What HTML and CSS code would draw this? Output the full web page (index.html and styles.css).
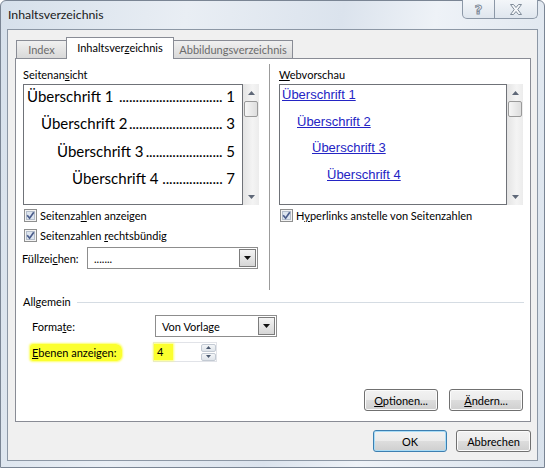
FILE: index.html
```html
<!DOCTYPE html>
<html lang="de">
<head>
  <meta charset="UTF-8">
  <title>Inhaltsverzeichnis</title>
  <link rel="stylesheet" href="styles.css">
</head>
<body>

<div class="window">
  <div class="titlebar">
    <span class="title">Inhaltsverzeichnis</span>
    <div class="caption-btns">
      <div class="cap-btn help">?</div>
      <div class="cap-btn close">
        <svg width="14" height="11" viewBox="0 0 14 11"><path d="M1.5 .5H4.5L7 3.5L9.5 .5H12.5L8.8 5.5L12.5 10.5H9.5L7 7.5L4.5 10.5H1.5L5.2 5.5Z" fill="#f6f8fa" stroke="#7f8b99"/></svg>
      </div>
    </div>
  </div>

  <div class="client">
    <div class="tabs">
      <div class="tab tab-index">Index</div>
      <div class="tab tab-toc active">Inhaltsver<u>z</u>eichnis</div>
      <div class="tab tab-figures">Abbildungsverzeichnis</div>
    </div>

    <div class="panel">
      <div class="columns">
        <div class="col col-left">
          <div class="label">Seitenan<u>s</u>icht</div>
          <div class="preview">
            <div class="list toc-list">
              <div class="toc-row lvl1"><span>Überschrift 1 </span><span class="leader">...............................</span><span class="num"> 1</span></div>
              <div class="toc-row lvl2"><span>Überschrift 2</span><span class="leader">............................</span><span class="num"> 3</span></div>
              <div class="toc-row lvl3"><span>Überschrift 3</span><span class="leader">.......................</span><span class="num"> 5</span></div>
              <div class="toc-row lvl4"><span>Überschrift 4 </span><span class="leader">..................</span><span class="num"> 7</span></div>
            </div>
            <div class="scrollbar">
              <div class="arrow"><svg width="7" height="4"><polygon points="0,4 3.5,0 7,4" fill="#5f6878"/></svg></div>
              <div class="thumb"></div>
              <div class="track"></div>
              <div class="arrow"><svg width="7" height="4"><polygon points="0,0 7,0 3.5,4" fill="#5f6878"/></svg></div>
            </div>
          </div>

          <label class="check">
            <svg class="box" width="13" height="13" viewBox="0 0 13 13"><rect x=".5" y=".5" width="12" height="12" fill="#f3f3f3" stroke="#8e8f8f"/><rect x="2.5" y="2.5" width="8" height="8" fill="#dde5ef" stroke="#b3bdcb"/><path d="M3.2 6.3L5.6 9.2L9.8 3.2" fill="none" stroke="#4b5d8c" stroke-width="1.7"/></svg>
            <span>Seitenza<u>h</u>len anzeigen</span>
          </label>
          <label class="check">
            <svg class="box" width="13" height="13" viewBox="0 0 13 13"><rect x=".5" y=".5" width="12" height="12" fill="#f3f3f3" stroke="#8e8f8f"/><rect x="2.5" y="2.5" width="8" height="8" fill="#dde5ef" stroke="#b3bdcb"/><path d="M3.2 6.3L5.6 9.2L9.8 3.2" fill="none" stroke="#4b5d8c" stroke-width="1.7"/></svg>
            <span>Seitenzahlen <u>r</u>echtsbündig</span>
          </label>

          <div class="field-row">
            <span class="field-label">Füllzei<u>c</u>hen:</span>
            <div class="combo combo-fill">
              <span class="combo-text">.......</span>
              <span class="drop"><svg width="7" height="4"><polygon points="0,0 7,0 3.5,4" fill="#111"/></svg></span>
            </div>
          </div>
        </div>

        <div class="divider"></div>

        <div class="col col-right">
          <div class="label"><u>W</u>ebvorschau</div>
          <div class="preview">
            <div class="list web-list">
              <a class="web-row lvl1">Überschrift 1</a>
              <a class="web-row lvl2">Überschrift 2</a>
              <a class="web-row lvl3">Überschrift 3</a>
              <a class="web-row lvl4">Überschrift 4</a>
            </div>
            <div class="scrollbar">
              <div class="arrow"><svg width="7" height="4"><polygon points="0,4 3.5,0 7,4" fill="#5f6878"/></svg></div>
              <div class="thumb"></div>
              <div class="track"></div>
              <div class="arrow"><svg width="7" height="4"><polygon points="0,0 7,0 3.5,4" fill="#5f6878"/></svg></div>
            </div>
          </div>

          <label class="check">
            <svg class="box" width="13" height="13" viewBox="0 0 13 13"><rect x=".5" y=".5" width="12" height="12" fill="#f3f3f3" stroke="#8e8f8f"/><rect x="2.5" y="2.5" width="8" height="8" fill="#dde5ef" stroke="#b3bdcb"/><path d="M3.2 6.3L5.6 9.2L9.8 3.2" fill="none" stroke="#4b5d8c" stroke-width="1.7"/></svg>
            <span>H<u>y</u>perlinks anstelle von Seitenzahlen</span>
          </label>
        </div>
      </div>

      <div class="group-title">Allgemein</div>

      <div class="form-row">
        <span class="form-label">Forma<u>t</u>e:</span>
        <div class="combo combo-format">
          <span class="combo-text">Von Vorlage</span>
          <span class="drop"><svg width="7" height="4"><polygon points="0,0 7,0 3.5,4" fill="#111"/></svg></span>
        </div>
      </div>

      <div class="form-row levels">
        <span class="form-label"><span class="marker"><u>E</u>benen anzeigen:</span></span>
        <div class="spinner">
          <span class="spin-value">4</span>
          <span class="spin-btns">
            <span class="spin-btn"><svg width="5" height="3"><polygon points="0,3 2.5,0 5,3" fill="#4c5a70"/></svg></span>
            <span class="spin-btn"><svg width="5" height="3"><polygon points="0,0 5,0 2.5,3" fill="#4c5a70"/></svg></span>
          </span>
        </div>
      </div>

      <div class="panel-buttons">
        <button class="btn"><u>O</u>ptionen...</button>
        <button class="btn"><u>Ä</u>ndern...</button>
      </div>
    </div>

    <div class="dialog-buttons">
      <button class="btn btn-default">OK</button>
      <button class="btn btn-cancel">Abbrechen</button>
    </div>
  </div>
</div>

</body>
</html>
```

FILE: styles.css
```css
* {
  box-sizing: border-box;
}
body {
  margin: 0;
  font-family: Lato, "Liberation Sans", sans-serif;
  font-size: 11px;
  color: #000;
  background: #fff;
}
u {
  text-decoration: underline;
  text-underline-offset: 1px;
}

/* window frame */
.window {
  width: 545px;
  height: 468px;
  display: flex;
  flex-direction: column;
  padding: 0 6px 6px;
  border: 1px solid #7a8594;
  border-radius: 6px 6px 0 0;
  background: linear-gradient(100deg, #d6e0eb 0%, #e9eef4 30%, #dbe3ed 55%, #eef2f7 70%, #d9e2ec 100%);
}
.titlebar {
  height: 28px;
  display: flex;
  align-items: flex-start;
}
.title {
  margin: 7px 0 0 1px;
  font-size: 12.3px;
  line-height: 14px;
  color: #1a1a1a;
}
.caption-btns {
  margin-left: auto;
  margin-top: -1px;
  display: flex;
  height: 19px;
  border: 1px solid #8c98a7;
  border-top: none;
  border-radius: 0 0 5px 5px;
  background: linear-gradient(#f3f6f9, #dfe6ee);
  overflow: hidden;
}
.cap-btn {
  display: flex;
  align-items: center;
  justify-content: center;
}
.help {
  width: 32px;
  border-right: 1px solid #8c98a7;
  font-family: "DejaVu Sans", sans-serif;
  font-size: 13px;
  font-weight: bold;
  color: #f6f8fa;
  -webkit-text-stroke: 1px #7f8b99;
}
.close {
  width: 42px;
}

/* client area */
.client {
  flex: 1;
  display: flex;
  flex-direction: column;
  padding: 7px 6px 0 7px;
  background: #f0f0f0;
  border: 1px solid #8c97a5;
}

.tabs {
  display: flex;
  align-items: flex-end;
  height: 22px;
  margin: 0 0 -1px 1px;
  position: relative;
  z-index: 1;
}
.tab {
  height: 18px;
  margin-bottom: 1px;
  border: 1px solid #898c95;
  border-bottom: none;
  background: linear-gradient(#f0f0f0, #d9d9d9);
  color: #6b6b6b;
  text-align: center;
  line-height: 18px;
}
.tab-index {
  width: 51px;
}
.tab-toc {
  width: 108px;
  margin-left: -1px;
}
.tab-figures {
  width: 120px;
  margin-left: -1px;
}
.tab.active {
  height: 22px;
  margin-bottom: 0;
  background: #fff;
  color: #000;
  line-height: 19px;
}

.panel {
  background: #fff;
  border: 1px solid #898c95;
  padding: 5px 6px 10px 7px;
}
.columns {
  display: flex;
  height: 226px;
}
.col-left {
  width: 236px;
}
.col-right {
  width: 244px;
}
.divider {
  width: 1px;
  margin: 0 9px 0 10px;
  background: #9b9b9b;
}
.label {
  margin: 4px 0 2px;
  line-height: 14px;
}

/* preview boxes */
.preview {
  display: flex;
  height: 121px;
}
.list {
  flex: 1;
  border: 1px solid #6f7278;
  background: #fff;
  overflow: hidden;
}
.scrollbar {
  width: 16px;
  display: flex;
  flex-direction: column;
  background: linear-gradient(90deg, #e4e4e4, #f4f4f4 60%, #ececec);
}
.scrollbar .arrow {
  height: 17px;
  display: flex;
  align-items: center;
  justify-content: center;
}
.scrollbar .thumb {
  height: 16px;
  margin: 0 1px;
  border: 1px solid #9a9a9a;
  border-radius: 2px;
  background: linear-gradient(90deg, #f6f6f6, #dedede);
}
.scrollbar .track {
  flex: 1;
}

.toc-list {
  padding: 1px 7px 0 0;
  font-family: Lato, "Liberation Sans", sans-serif;
  font-size: 15px;
}
.toc-row {
  display: flex;
  height: 20px;
  line-height: 20px;
  margin-bottom: 7.3px;
  white-space: pre;
}
.toc-row .leader {
  flex: 1;
  min-width: 0;
  text-align: right;
  letter-spacing: -0.2px;
}
.toc-row.lvl1 { padding-left: 3px; }
.toc-row.lvl2 { padding-left: 17px; }
.toc-row.lvl3 { padding-left: 33px; }
.toc-row.lvl4 { padding-left: 48px; }

.web-list {
  padding-top: 1px;
  font-family: "Liberation Sans", Arial, sans-serif;
  font-size: 13px;
}
.web-row {
  display: block;
  width: max-content;
  height: 18px;
  line-height: 18px;
  margin-bottom: 8.7px;
  color: #2424c4;
  text-decoration: underline;
}
.web-row.lvl1 { margin-left: 2px; }
.web-row.lvl2 { margin-left: 17px; }
.web-row.lvl3 { margin-left: 32px; }
.web-row.lvl4 { margin-left: 47px; }

/* checkboxes */
.check {
  display: flex;
  align-items: center;
  gap: 3px;
  height: 20px;
  padding-left: 1px;
}
.check .box {
  flex: none;
}

/* combo boxes */
.field-row {
  display: flex;
  align-items: center;
  margin-top: 2px;
}
.field-label {
  width: 65px;
  margin-left: -1px;
}
.combo {
  display: flex;
  align-items: center;
  height: 22px;
  border: 1px solid #8d8d8d;
  background: #fff;
  padding: 1px;
}
.combo-fill {
  width: 171px;
}
.combo-format {
  width: 122px;
}
.combo-text {
  flex: 1;
  padding-left: 5px;
}
.drop {
  width: 17px;
  height: 18px;
  display: flex;
  align-items: center;
  justify-content: center;
  border: 1px solid #7c7c7c;
  background: linear-gradient(#f4f4f4, #d6d6d6);
}

/* general section */
.group-title {
  display: flex;
  align-items: center;
  margin-top: 5px;
  line-height: 14px;
}
.group-title::after {
  content: "";
  flex: 1;
  height: 1px;
  margin-left: 6px;
  background: #d5dce3;
}
.form-row {
  display: flex;
  align-items: center;
  height: 22px;
  margin-top: 6px;
  padding-left: 9px;
}
.form-label {
  width: 123px;
}
.form-row.levels {
  height: 20px;
  margin-top: 5px;
}
.marker {
  margin-left: -2px;
  padding: 2px 6px 2px 2px;
  background: #fbff2e;
  border-radius: 3px 6px 5px 3px;
  box-shadow: 0 0 2px 1px #fcff6a;
}
.spinner {
  display: flex;
  align-items: center;
  width: 64px;
  height: 20px;
  margin-left: -2px;
  border: 1px solid #e1e3e8;
  background: #fff;
}
.spin-value {
  height: 16px;
  line-height: 16px;
  padding: 0 10px 0 3px;
  background: #fbff2e;
  box-shadow: 0 0 2px 1px #fcff6a;
}
.spin-btns {
  margin-left: auto;
  display: flex;
  flex-direction: column;
  gap: 1px;
  width: 15px;
  height: 17px;
}
.spin-btn {
  flex: 1;
  display: flex;
  align-items: center;
  justify-content: center;
  border: 1px solid #c3cad3;
  border-radius: 2px;
  background: linear-gradient(#f4f6f8, #dfe4ea);
}

/* buttons */
.panel-buttons,
.dialog-buttons {
  display: flex;
  justify-content: flex-end;
}
.panel-buttons {
  gap: 11px;
  margin-top: 27px;
  padding-right: 1px;
}
.dialog-buttons {
  gap: 9px;
  margin-top: 8px;
}
.btn {
  width: 74px;
  height: 22px;
  padding: 0;
  font-family: Lato, "Liberation Sans", sans-serif;
  font-size: 11px;
  color: #000;
  border: 1px solid #707070;
  border-radius: 3px;
  background: linear-gradient(#f2f2f2 0%, #ebebeb 50%, #dddddd 51%, #cfcfcf 100%);
  box-shadow: inset 0 0 0 1px #fbfbfb;
}
.btn-default {
  border-color: #3c7fb1;
  box-shadow: inset 0 0 0 1px #a9dcf6;
}
.btn-cancel {
  width: 75px;
}
```
